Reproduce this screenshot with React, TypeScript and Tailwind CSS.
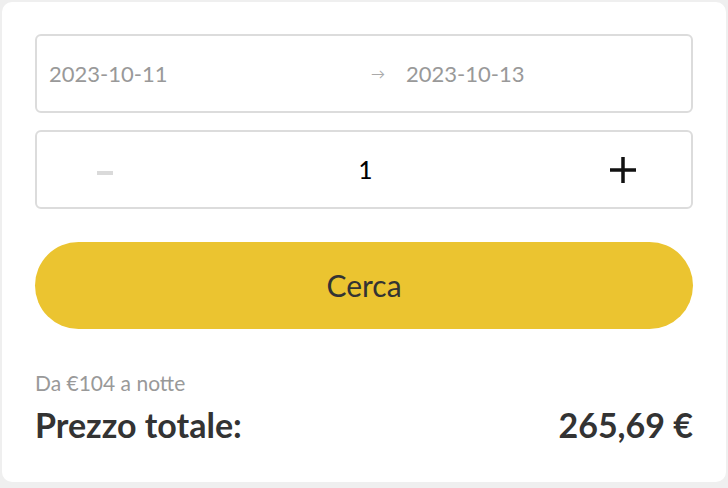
export default function App() {
  return (
    <div className="min-h-screen bg-[#efefef] p-[2px] pb-[6px]" style={{ fontFamily: '"Lato", "Open Sans", sans-serif' }}>
      <div className="bg-white rounded-[10px] h-[480px] px-[33px] pt-[32px]">
        {/* Dates */}
        <div className="h-[79px] border-2 border-[#dcdcdc] rounded-[6px] flex items-center px-[12px] text-[22px] text-[#999]">
          <span className="w-[322px]">2023-10-11</span>
          <span className="text-[14px] text-[#aaa] w-[35px]">→</span>
          <span>2023-10-13</span>
        </div>

        {/* Guests */}
        <div className="mt-[17px] h-[79px] border-2 border-[#dcdcdc] rounded-[6px] flex items-center justify-between px-[60px]">
          <span className="block w-[16px] h-[4px] bg-[#dadada] mt-[6px]" />
          <span className="text-[24px] font-medium text-black pl-[10px]">1</span>
          <svg width="30" height="30" viewBox="0 0 30 30" className="-mr-[7px]">
            <path d="M15 2v26M2 15h26" stroke="#111" strokeWidth="3.5" />
          </svg>
        </div>

        {/* Button */}
        <button className="mt-[33px] w-full h-[87px] rounded-full bg-[#ebc430] text-[30px] text-[#333]">
          Cerca
        </button>

        {/* Price */}
        <div className="mt-[40px] text-[21px] text-[#999] leading-[28px]">Da €104 a notte</div>
        <div className="mt-[8px] flex items-center justify-between text-[34px] font-bold text-[#333] leading-[40px]">
          <span>Prezzo totale:</span>
          <span>265,69 €</span>
        </div>
      </div>
    </div>
  );
}
